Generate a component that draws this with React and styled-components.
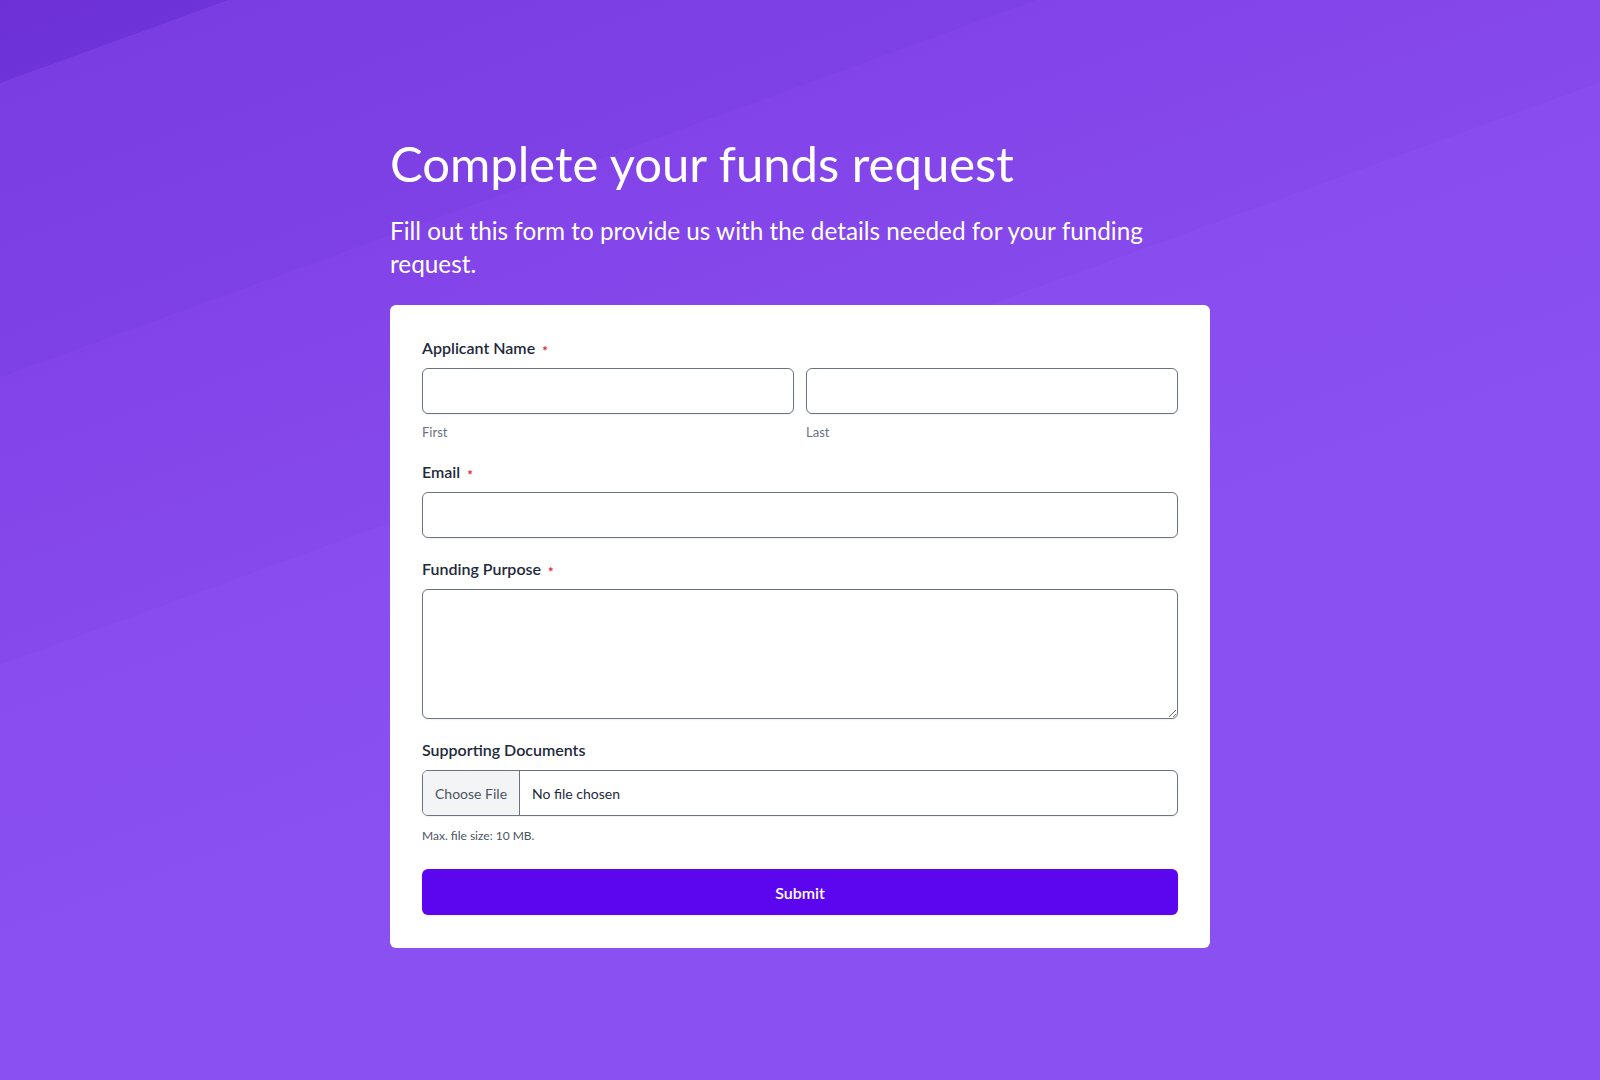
import React from "react";
import styled, { createGlobalStyle } from "styled-components";

const GlobalStyle = createGlobalStyle`
  html, body {
    margin: 0;
    padding: 0;
  }
  body {
    font-family: Lato, "Noto Sans", sans-serif;
    -webkit-font-smoothing: antialiased;
  }
  * { box-sizing: border-box; }
`;

const Page = styled.div`
  min-height: 100vh;
  display: flex;
  justify-content: center;
  padding: 134px 0 80px;
  background: linear-gradient(
    160deg,
    #6c30d6 0%,
    #6f34d9 5%,
    #7a3de2 5%,
    #7e41e6 22.7%,
    #8244e8 22.7%,
    #8649ec 40%,
    #884cef 40%,
    #8b50f1 60%,
    #8b50f1 100%
  );
`;

const Column = styled.main`
  width: 820px;
  display: flex;
  flex-direction: column;
`;

const Title = styled.h1`
  margin: 0;
  font-family: Lato, "Noto Sans", sans-serif;
  font-weight: 400;
  font-size: 49px;
  line-height: 58px;
  color: #ffffff;
  letter-spacing: 0;
`;

const Subtitle = styled.p`
  margin: 22px 0 25px;
  font-size: 24.3px;
  line-height: 33px;
  font-weight: 400;
  color: #ffffff;
`;

const Card = styled.form`
  background: #ffffff;
  border-radius: 6px;
  padding: 32px 32px 33px;
  display: flex;
  flex-direction: column;
  gap: 20px;
`;

const Field = styled.div`
  display: flex;
  flex-direction: column;
`;

const Label = styled.label`
  font-size: 16px;
  line-height: 22px;
  font-weight: 600;
  color: #1e293b;
  margin-bottom: 9px;
  display: flex;
  align-items: center;
`;

const Required = styled.span`
  color: #dc2626;
  font-size: 13px;
  line-height: 12px;
  margin-left: 7px;
  padding-top: 6px;
  font-weight: 700;
`;

const NameRow = styled.div`
  display: grid;
  grid-template-columns: 1fr 1fr;
  gap: 12px;
`;

const SubField = styled.div`
  display: flex;
  flex-direction: column;
`;

const inputBase = `
  width: 100%;
  border: 1px solid #6b7280;
  border-radius: 6px;
  background: #ffffff;
  box-shadow: 0 1px 2px rgba(0, 0, 0, 0.06);
  font-family: Lato, "Noto Sans", sans-serif;
  font-size: 16px;
  color: #1e293b;
  outline: none;
`;

const TextInput = styled.input`
  ${inputBase}
  height: 46px;
  padding: 0 12px;
  display: block;
`;

const TextArea = styled.textarea`
  ${inputBase}
  display: block;
  height: 130px;
  padding: 10px 12px;
  resize: vertical;
`;

const SubLabel = styled.span`
  margin-top: 9px;
  font-size: 13px;
  line-height: 18px;
  color: #6b7280;
`;

const FileBox = styled.label`
  ${inputBase}
  height: 46px;
  display: flex;
  align-items: stretch;
  overflow: hidden;
  cursor: pointer;
`;

const HiddenFile = styled.input`
  display: none;
`;

const ChooseButton = styled.span`
  display: flex;
  align-items: center;
  padding: 0 12px;
  background: #f3f4f6;
  border-right: 1px solid #6b7280;
  font-size: 14px;
  color: #4b5563;
`;

const FileName = styled.span`
  display: flex;
  align-items: center;
  padding: 1px 12px 0;
  font-size: 14px;
  color: #1e293b;
`;

const Hint = styled.span`
  margin-top: 11px;
  font-size: 12px;
  line-height: 18px;
  color: #4b5563;
`;

const SubmitButton = styled.button`
  margin-top: 4px;
  height: 46px;
  width: 100%;
  border: none;
  border-radius: 6px;
  background: #5b06ee;
  box-shadow: 0 1px 3px rgba(0, 0, 0, 0.08);
  color: #ffffff;
  font-family: Lato, "Noto Sans", sans-serif;
  font-size: 16px;
  font-weight: 600;
  cursor: pointer;
`;

export default function App() {
  return (
    <>
      <GlobalStyle />
      <Page>
        <Column>
          <Title>Complete your funds request</Title>
          <Subtitle>
            Fill out this form to provide us with the details needed for your funding request.
          </Subtitle>
          <Card onSubmit={(e) => e.preventDefault()}>
            <Field>
              <Label>
                Applicant Name<Required>*</Required>
              </Label>
              <NameRow>
                <SubField>
                  <TextInput type="text" aria-label="First" />
                  <SubLabel>First</SubLabel>
                </SubField>
                <SubField>
                  <TextInput type="text" aria-label="Last" />
                  <SubLabel>Last</SubLabel>
                </SubField>
              </NameRow>
            </Field>
            <Field>
              <Label htmlFor="email">
                Email<Required>*</Required>
              </Label>
              <TextInput id="email" type="email" />
            </Field>
            <Field>
              <Label htmlFor="purpose">
                Funding Purpose<Required>*</Required>
              </Label>
              <TextArea id="purpose" />
            </Field>
            <Field>
              <Label as="span">Supporting Documents</Label>
              <FileBox>
                <HiddenFile type="file" />
                <ChooseButton>Choose File</ChooseButton>
                <FileName>No file chosen</FileName>
              </FileBox>
              <Hint>Max. file size: 10 MB.</Hint>
            </Field>
            <SubmitButton type="submit">Submit</SubmitButton>
          </Card>
        </Column>
      </Page>
    </>
  );
}
